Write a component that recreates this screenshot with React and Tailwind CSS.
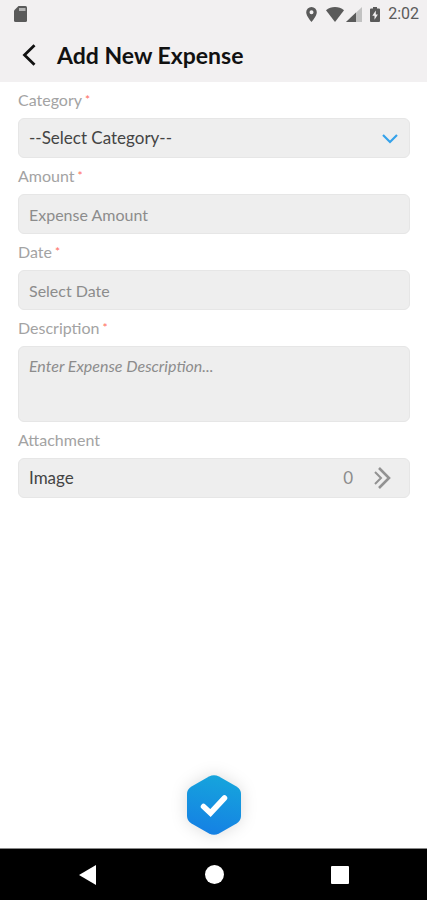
import { useState } from 'react';

const CATEGORIES = ['Travel', 'Food', 'Office Supplies', 'Other'];

const FIELD = 'block w-full rounded-md border border-[#e6e6e6] bg-[#eeeeee] px-[10px] text-[#444444] placeholder:text-[#8c8c8c] focus:outline-none';

function StatusBar() {
  return (
    <div className="flex h-7 items-center justify-between pl-[14px] pr-2 text-[#5a5a5a]">
      <svg width="13" height="16" viewBox="0 0 13 16" fill="currentColor">
        <path d="M4.5 0H11.5Q13 0 13 1.500V14.500Q13 16 11.500 16H1.500Q0 16 0 14.500V4.500Z" />
        <path d="M5 2h6.500v3H5z" fill="#b4b4b4" />
      </svg>
      <div className="flex items-center">
        <svg width="11" height="15" viewBox="0 0 11 15" fill="currentColor">
          <path fillRule="evenodd" d="M5.500 0A5.300 5.300 0 0 0 .2 5.300C.2 9.200 5.500 15 5.500 15s5.300-5.800 5.300-9.700A5.300 5.300 0 0 0 5.500 0Zm0 3.300a2 2 0 1 1 0 4 2 2 0 0 1 0-4Z" />
        </svg>
        <svg className="ml-[9px]" width="18" height="15" viewBox="0 0 18 15" fill="currentColor">
          <path d="M0 3.200C5-1 13-1 18 3.200L9 15Z" />
        </svg>
        <svg className="ml-[2px]" width="16" height="15" viewBox="0 0 16 15" fill="currentColor">
          <path d="M16 0v15H0Z" fill="#c2c2c2" />
          <path d="M10 5.600V15H0Z" />
        </svg>
        <svg className="ml-2" width="10" height="15" viewBox="0 0 10 15" fill="currentColor">
          <path d="M3 0h4v1.500h2q1 0 1 1V14q0 1-1 1H1q-1 0-1-1V2.500q0-1 1-1h2Z" />
          <path d="M5.800 3.500 2.300 8.800h2.200v4L7.900 7.500H5.800Z" fill="#f2f0f1" />
        </svg>
        <span className="ml-2 font-[Roboto,sans-serif] text-base leading-7">2:02</span>
      </div>
    </div>
  );
}

function Label({ htmlFor, required, children }) {
  return (
    <label htmlFor={htmlFor} className="mt-2 mb-2 block text-base leading-5 text-[#a3a3a3]">
      {children}
      {required && <span className="text-xs leading-5 text-[#ff6b5e] align-top"> *</span>}
    </label>
  );
}

export default function App() {
  const [form, setForm] = useState({ category: '', amount: '', date: '', description: '' });

  const handleChange = (e) => {
    setForm({ ...form, [e.target.name]: e.target.value });
  };

  return (
    <div className="flex min-h-screen flex-col bg-white font-[Lato,sans-serif]">
      <header className="bg-[#f2f0f1]">
        <StatusBar />
        <div className="flex h-[54px] items-center pl-[22px]">
          <button type="button" aria-label="Back" className="flex">
            <svg width="14" height="22" viewBox="0 0 14 22" fill="none" stroke="#111111" strokeWidth="2.800">
              <path d="M12.500 1.200 2.500 11l10 9.800" />
            </svg>
          </button>
          <h1 className="ml-[21px] text-[23px] leading-7 font-bold text-[#111111]">Add New Expense</h1>
        </div>
      </header>

      <main className="flex flex-1 flex-col pr-[17px] pl-[18px]">
        <Label htmlFor="category" required>Category</Label>
        <div className="relative">
          <select
            id="category"
            name="category"
            value={form.category}
            onChange={handleChange}
            className={`${FIELD} h-10 appearance-none text-[17px]`}
          >
            <option value="">--Select Category--</option>
            {CATEGORIES.map(c => <option key={c} value={c}>{c}</option>)}
          </select>
          <svg className="pointer-events-none absolute top-4 right-3" width="16" height="10" viewBox="0 0 16 10" fill="none" stroke="#35a2ea" strokeWidth="2.200">
            <path d="m1 1 7 7 7-7" />
          </svg>
        </div>

        <Label htmlFor="amount" required>Amount</Label>
        <input id="amount" name="amount" type="text" value={form.amount} onChange={handleChange} placeholder="Expense Amount" className={`${FIELD} h-10 text-base`} />

        <Label htmlFor="date" required>Date</Label>
        <input id="date" name="date" type="text" value={form.date} onChange={handleChange} placeholder="Select Date" className={`${FIELD} h-10 text-base`} />

        <Label htmlFor="description" required>Description</Label>
        <textarea
          id="description"
          name="description"
          value={form.description}
          onChange={handleChange}
          placeholder="Enter Expense Description..."
          className={`${FIELD} h-[76px] resize-none py-[9px] text-base leading-5 placeholder:italic`}
        />

        <Label htmlFor="attachment">Attachment</Label>
        <button id="attachment" type="button" className={`${FIELD} h-10 text-[17px]`}>
          <span className="flex items-center">
            <span className="flex-1 text-left">Image</span>
            <span className="text-[17px] leading-5 text-[#8c8c8c]">0</span>
            <svg className="mr-2 ml-5" width="18" height="22" viewBox="0 0 18 22" fill="none" stroke="#929292">
              <path d="m2 5 6 6-6 6" strokeWidth="2" />
              <path d="m6 1 10 10L6 21" strokeWidth="2.600" />
            </svg>
          </span>
        </button>

        <button type="button" aria-label="Save expense" className="mx-auto mt-auto mb-[13px] drop-shadow-[0_0_8px_rgba(0,0,0,0.14)]">
          <svg width="54" height="60" viewBox="0 0 54 60" fill="none">
            <defs>
              <linearGradient id="save" x1="0.6" y1="0" x2="0.4" y2="1">
                <stop offset="0" stopColor="#16a5dc" />
                <stop offset="1" stopColor="#1580e4" />
              </linearGradient>
            </defs>
            <path d="M22 1.500Q27-1.200 32 1.500L49.500 11.500Q54 14.200 54 19V41Q54 45.800 49.500 48.500L32 58.500Q27 61.200 22 58.500L4.500 48.500Q0 45.800 0 41V19Q0 14.200 4.500 11.500Z" fill="url(#save)" />
            <path d="m16.500 31.500 7 6.500L37.500 23" stroke="#ffffff" strokeWidth="5.500" strokeLinecap="round" />
          </svg>
        </button>
      </main>

      <nav className="flex h-[52px] items-center justify-around border-t border-[#888888] bg-black px-6">
        <button type="button" aria-label="Back" className="flex w-5 justify-center">
          <svg width="17" height="20" viewBox="0 0 17 20" fill="#ffffff"><path d="M17 0v20L0 10Z" /></svg>
        </button>
        <button type="button" aria-label="Home" className="size-[19px] rounded-full bg-white" />
        <button type="button" aria-label="Recent apps" className="size-[18px] rounded-[1px] bg-white" />
      </nav>
    </div>
  );
}
